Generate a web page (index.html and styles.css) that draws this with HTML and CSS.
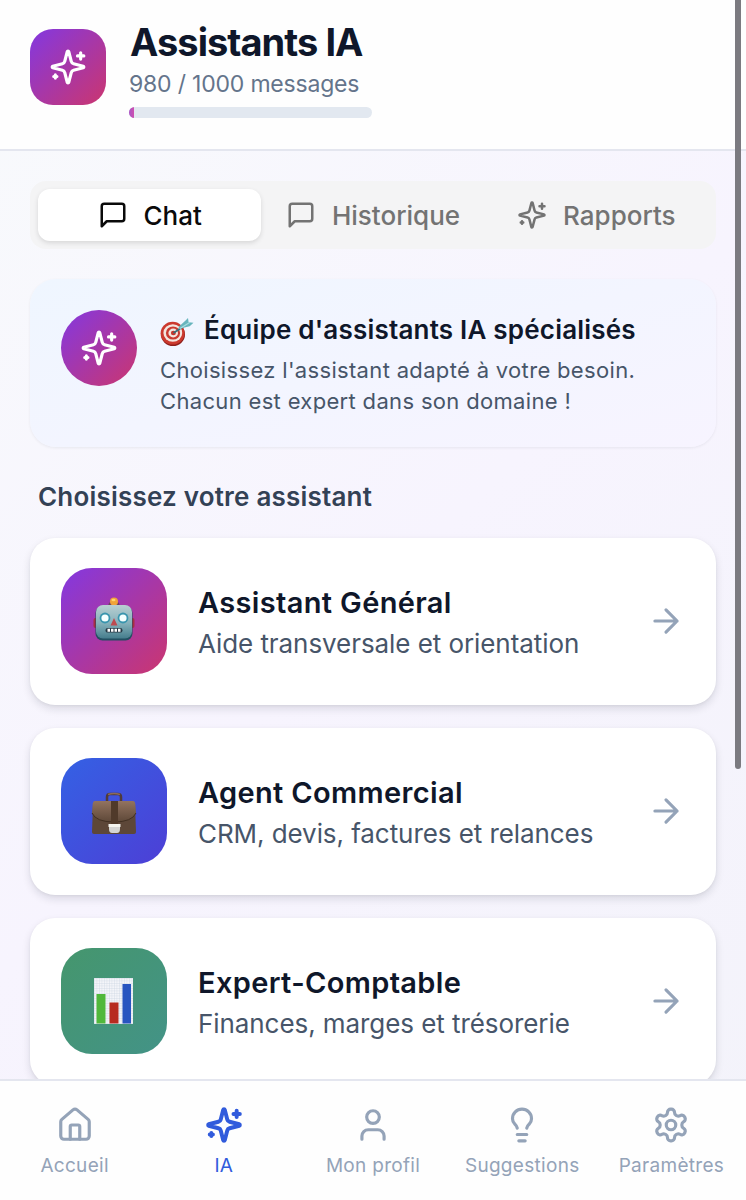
FILE: index.html
```html
<!DOCTYPE html>
<html lang="fr">
<head>
  <meta charset="UTF-8" />
  <meta name="viewport" content="width=device-width, initial-scale=1.0"/>
  <title>Assistants IA</title>
  <link rel="stylesheet" href="styles.css">
</head>
<body>
  <!-- Shared icons -->
  <svg class="sprite">
    <symbol id="sparkles" viewBox="0 0 24 24">
      <path d="M9.937 15.5A2 2 0 0 0 8.5 14.063l-6.135-1.582a.5.5 0 0 1 0-.962L8.5 9.936A2 2 0 0 0 9.937 8.5l1.582-6.135a.5.5 0 0 1 .963 0L14.063 8.5A2 2 0 0 0 15.5 9.937l6.135 1.581a.5.5 0 0 1 0 .964L15.5 14.063a2 2 0 0 0-1.437 1.437l-1.582 6.135a.5.5 0 0 1-.963 0z"/>
      <path d="M20 3v4M22 5h-4M4 17v2M5 18H3"/>
    </symbol>
    <symbol id="message" viewBox="0 0 24 24">
      <path d="M21 15a2 2 0 0 1-2 2H7l-4 4V5a2 2 0 0 1 2-2h14a2 2 0 0 1 2 2z"/>
    </symbol>
    <symbol id="arrow" viewBox="0 0 24 24">
      <path d="M5 12h14M12 5l7 7-7 7"/>
    </symbol>
  </svg>

  <header class="header">
    <div class="logo"><svg class="icon"><use href="#sparkles"/></svg></div>
    <div class="header-text">
      <h1>Assistants IA</h1>
      <p class="quota">980 / 1000 messages</p>
      <div class="progress"><div class="progress-bar" style="width: 2%"></div></div>
    </div>
  </header>

  <main class="content">
    <div class="tabs">
      <button class="tab active"><svg class="icon icon-sm"><use href="#message"/></svg><span>Chat</span></button>
      <button class="tab"><svg class="icon icon-sm"><use href="#message"/></svg><span>Historique</span></button>
      <button class="tab"><svg class="icon icon-sm"><use href="#sparkles"/></svg><span>Rapports</span></button>
    </div>

    <section class="intro">
      <div class="intro-icon"><svg class="icon"><use href="#sparkles"/></svg></div>
      <div class="intro-text">
        <h2>
          <svg class="target" viewBox="0 0 34 30">
            <ellipse cx="13" cy="17.5" rx="12" ry="11.5" fill="#8e1f1b"/>
            <ellipse cx="12.6" cy="16.2" rx="12" ry="11.4" fill="#cb392e"/>
            <ellipse cx="12.8" cy="16" rx="9.4" ry="8.8" fill="#f3e6df"/>
            <ellipse cx="13" cy="16" rx="7.1" ry="6.6" fill="#c93a30"/>
            <ellipse cx="13.2" cy="16" rx="4.8" ry="4.4" fill="#f3e6df"/>
            <ellipse cx="13.4" cy="16" rx="2.5" ry="2.3" fill="#c5352c"/>
            <path d="M13.5 16L24 9" stroke="#34707c" stroke-width="1.6"/>
            <path d="M19 9.5l6-5.5 3-3 .6 4.2 4.9.5-3.8 3.6-5.2 1.2-6 1.8z" fill="#67b5bd"/>
            <path d="M20 11.5l10-6.3" stroke="#a6dce0" stroke-width="1.2"/>
          </svg>
          <span>Équipe d'assistants IA spécialisés</span>
        </h2>
        <p>Choisissez l'assistant adapté à votre besoin.<br>Chacun est expert dans son domaine !</p>
      </div>
    </section>

    <h3 class="section-title">Choisissez votre assistant</h3>

    <div class="assistant-list">
      <a class="assistant">
        <div class="avatar avatar-general">
          <svg viewBox="0 0 42 44">
            <defs>
              <linearGradient id="metal" x1="0" y1="0" x2="0" y2="1">
                <stop offset="0" stop-color="#b9cfd2"/>
                <stop offset=".55" stop-color="#84b0ba"/>
                <stop offset="1" stop-color="#457d8c"/>
              </linearGradient>
            </defs>
            <rect x=".5" y="21" width="5" height="10" rx="2" fill="#a92d43"/>
            <rect x="36.5" y="21" width="5" height="10" rx="2" fill="#a92d43"/>
            <ellipse cx="21" cy="7.5" rx="5.5" ry="3.5" fill="#70405f"/>
            <circle cx="21" cy="4.5" r="4" fill="#f0a338"/>
            <ellipse cx="20.5" cy="3" rx="2" ry="1.3" fill="#ffd36d"/>
            <rect x="2.5" y="9" width="37" height="34.5" rx="7" fill="#234f61"/>
            <rect x="3" y="8" width="36" height="33.5" rx="7" fill="url(#metal)"/>
            <circle cx="12" cy="21" r="5.4" fill="#3995ae"/>
            <circle cx="30" cy="21" r="5.4" fill="#3995ae"/>
            <circle cx="12" cy="21" r="3.6" fill="#f5ffff"/>
            <circle cx="30" cy="21" r="3.6" fill="#f5ffff"/>
            <path d="M21 21l3.500 7.500h-7z" fill="#bd4a4f"/>
            <rect x="12.5" y="31" width="17" height="4.6" rx="2.2" fill="#263945"/>
            <path d="M14.500 33.300h13" stroke="#fff" stroke-width="3" stroke-dasharray="2.500 1"/>
          </svg>
        </div>
        <div class="assistant-text">
          <h4>Assistant Général</h4>
          <p>Aide transversale et orientation</p>
        </div>
        <svg class="icon arrow"><use href="#arrow"/></svg>
      </a>

      <a class="assistant">
        <div class="avatar avatar-sales">
          <svg class="briefcase" viewBox="0 0 46 44">
            <defs>
              <linearGradient id="leather" x1="0" y1="0" x2="0" y2="1">
                <stop offset="0" stop-color="#927360"/>
                <stop offset="1" stop-color="#5e4838"/>
              </linearGradient>
            </defs>
            <path d="M16 11V6q0-3 3-3h8q3 0 3 3v5" fill="none" stroke="#4f3b3b" stroke-width="2.5"/>
            <path d="M17 3.500q6-2 12 0" fill="none" stroke="#8b6a5b" stroke-width="1.5"/>
            <path d="M2 14h42l1 27q0 2-2 2H3q-2 0-2-2z" fill="#5d4738"/>
            <path d="M4 10h38q2 0 2.300 3l.7 9q-4 9-22 9T1 22l.7-9Q2 10 4 10z" fill="url(#leather)"/>
            <path d="M1 22q4 9 22 9t22-9" fill="none" stroke="#423022" stroke-width="1"/>
            <path d="M20 10h7v23h-7z" fill="#503a2a"/>
            <path d="M18 33h11v5q0 4-3 4h-5q-3 0-3-4z" fill="#d5d5d3"/>
            <path d="M17.500 33h12v3h-12z" fill="#f4f4ee"/>
          </svg>
        </div>
        <div class="assistant-text">
          <h4>Agent Commercial</h4>
          <p>CRM, devis, factures et relances</p>
        </div>
        <svg class="icon arrow"><use href="#arrow"/></svg>
      </a>

      <a class="assistant">
        <div class="avatar avatar-finance">
          <svg class="chart" viewBox="0 0 39 46">
            <defs>
              <pattern id="graph-paper" width="2.5" height="2.5" patternUnits="userSpaceOnUse">
                <path d="M0 0h2.500M0 0v2.500" stroke="#cbd3df" stroke-width=".7"/>
              </pattern>
            </defs>
            <path d="M0 0h39v46H0z" fill="#f4f5f9"/>
            <path d="M0 0h39v46H0z" fill="url(#graph-paper)"/>
            <path d="M2.500 16h9v29.500h-9z" fill="#51b83b"/>
            <path d="M15.500 24.500h9v21h-9z" fill="#b72b20"/>
            <path d="M28.500 6h8.500v39.500h-8.500z" fill="#2855c0"/>
          </svg>
        </div>
        <div class="assistant-text">
          <h4>Expert-Comptable</h4>
          <p>Finances, marges et trésorerie</p>
        </div>
        <svg class="icon arrow"><use href="#arrow"/></svg>
      </a>
    </div>
  </main>

  <nav class="bottom-nav">
    <a class="nav-item">
      <svg class="icon" viewBox="0 0 24 24"><path d="M15 21v-8a1 1 0 0 0-1-1h-4a1 1 0 0 0-1 1v8"/><path d="M3 10a2 2 0 0 1 .709-1.528l7-5.999a2 2 0 0 1 2.582 0l7 5.999A2 2 0 0 1 21 10v9a2 2 0 0 1-2 2H5a2 2 0 0 1-2-2z"/></svg>
      <span>Accueil</span>
    </a>
    <a class="nav-item current">
      <svg class="icon"><use href="#sparkles"/></svg>
      <span>IA</span>
    </a>
    <a class="nav-item">
      <svg class="icon" viewBox="0 0 24 24"><path d="M19 21v-2a4 4 0 0 0-4-4H9a4 4 0 0 0-4 4v2"/><circle cx="12" cy="7" r="4"/></svg>
      <span>Mon profil</span>
    </a>
    <a class="nav-item">
      <svg class="icon" viewBox="0 0 24 24"><path d="M15 14c.2-1 .7-1.700 1.500-2.500 1-.9 1.500-2.200 1.500-3.500A6 6 0 0 0 6 8c0 1 .2 2.200 1.500 3.500.7.7 1.300 1.500 1.500 2.500M9 18h6M10 22h4"/></svg>
      <span>Suggestions</span>
    </a>
    <a class="nav-item">
      <svg class="icon" viewBox="0 0 24 24"><path d="M12.22 2h-.44a2 2 0 0 0-2 2v.18a2 2 0 0 1-1 1.730l-.43.25a2 2 0 0 1-2 0l-.15-.08a2 2 0 0 0-2.730.73l-.22.38a2 2 0 0 0 .73 2.730l.15.1a2 2 0 0 1 1 1.720v.51a2 2 0 0 1-1 1.740l-.15.09a2 2 0 0 0-.73 2.730l.22.38a2 2 0 0 0 2.730.73l.15-.08a2 2 0 0 1 2 0l.43.25a2 2 0 0 1 1 1.730V20a2 2 0 0 0 2 2h.44a2 2 0 0 0 2-2v-.18a2 2 0 0 1 1-1.730l.43-.25a2 2 0 0 1 2 0l.15.08a2 2 0 0 0 2.730-.73l.22-.39a2 2 0 0 0-.73-2.730l-.15-.08a2 2 0 0 1-1-1.740v-.5a2 2 0 0 1 1-1.740l.15-.09a2 2 0 0 0 .73-2.730l-.22-.38a2 2 0 0 0-2.730-.73l-.15.08a2 2 0 0 1-2 0l-.43-.25a2 2 0 0 1-1-1.730V4a2 2 0 0 0-2-2z"/><circle cx="12" cy="12" r="3"/></svg>
      <span>Paramètres</span>
    </a>
  </nav>

  <div class="scroll-thumb"></div>
</body>
</html>
```

FILE: styles.css
```css
* {
  box-sizing: border-box;
}

body {
  margin: 0;
  height: 1200px;
  display: flex;
  flex-direction: column;
  overflow: hidden;
  position: relative;
  font-family: Inter, "Liberation Sans", sans-serif;
  color: #0f172a;
  background: linear-gradient(135deg, #f8fafc 0%, #f7f4fe 50%, #f3f3fa 100%);
}

h1, h2, h3, h4, p {
  margin: 0;
}

.sprite {
  display: none;
}

.icon {
  width: 38px;
  height: 38px;
  flex: none;
  fill: none;
  stroke: currentColor;
  stroke-width: 2;
  stroke-linecap: round;
  stroke-linejoin: round;
}

.icon-sm {
  width: 30px;
  height: 30px;
}

/* Header */
.header {
  flex: none;
  height: 151px;
  display: flex;
  align-items: flex-start;
  gap: 23px;
  padding: 18px 30px 0;
  background: #fefefe;
  border-bottom: 2px solid #e4e6ef;
}

.logo {
  width: 76px;
  height: 76px;
  margin-top: 11px;
  display: flex;
  align-items: center;
  justify-content: center;
  border-radius: 23px;
  color: #fff;
  background: linear-gradient(135deg, #8338e0, #cb366f);
}

.header h1 {
  padding-left: 1px;
  font-size: 38px;
  line-height: 48px;
  font-weight: 700;
  letter-spacing: -0.95px;
}

.quota {
  margin-top: 1px;
  font-size: 23px;
  line-height: 34px;
  letter-spacing: -0.2px;
  color: #64748b;
}

.progress {
  width: 243px;
  height: 11px;
  margin-top: 6px;
  border-radius: 6px;
  overflow: hidden;
  background: #e2e8f0;
}

.progress-bar {
  height: 100%;
  background: linear-gradient(90deg, #a855c7, #cf4fae);
}

/* Content */
.content {
  flex: 1;
  min-height: 0;
  overflow: hidden;
  padding: 30px 30px 0;
}

.tabs {
  height: 68px;
  padding: 8px;
  display: grid;
  grid-template-columns: repeat(3, 1fr);
  border-radius: 16px;
  background: #f4f4f5;
}

.tab {
  display: flex;
  align-items: center;
  justify-content: center;
  gap: 16px;
  padding: 0;
  border: 0;
  border-radius: 12px;
  background: none;
  color: #737373;
  font: 500 26px Inter, "Liberation Sans", sans-serif;
}

.tab.active {
  background: #fff;
  color: #0a0a0a;
  box-shadow: 0 2px 5px rgba(0, 0, 0, 0.12);
}

.intro {
  height: 168px;
  margin-top: 30px;
  padding: 31px;
  display: flex;
  gap: 23px;
  border-radius: 26px;
  background: linear-gradient(165deg, #eff6ff, #f7f4ff);
  box-shadow: 0 1px 3px rgba(15, 23, 42, 0.07);
}

.intro-icon {
  width: 76px;
  height: 76px;
  flex: none;
  display: flex;
  align-items: center;
  justify-content: center;
  border-radius: 50%;
  color: #fff;
  background: linear-gradient(135deg, #8338e0, #cb366f);
}

.intro h2 {
  display: flex;
  align-items: center;
  gap: 10px;
  font-size: 26px;
  line-height: 40px;
  font-weight: 600;
  letter-spacing: 0.2px;
  white-space: nowrap;
}

.target {
  width: 34px;
  height: 30px;
  margin-top: 3px;
}

.intro p {
  margin-top: 5px;
  font-size: 22px;
  line-height: 31px;
  letter-spacing: 0.33px;
  color: #475569;
  white-space: nowrap;
}

.section-title {
  margin: 30px 0 22px 8px;
  font-size: 26px;
  line-height: 39px;
  font-weight: 600;
  letter-spacing: 0.2px;
  color: #334155;
}

/* Assistants */
.assistant-list {
  display: flex;
  flex-direction: column;
  gap: 23px;
}

.assistant {
  height: 167px;
  flex: none;
  display: flex;
  align-items: center;
  padding: 0 31px 1px;
  border-radius: 25px;
  background: #fff;
  box-shadow: 0 4px 9px rgba(15, 23, 42, 0.12), 0 1px 3px rgba(15, 23, 42, 0.05);
}

.avatar {
  width: 106px;
  height: 106px;
  flex: none;
  display: flex;
  align-items: center;
  justify-content: center;
  border-radius: 31px;
}

.avatar svg {
  width: 42px;
  height: 44px;
  margin-bottom: 4px;
}

.avatar .briefcase {
  width: 46px;
  margin: 4px 0 0;
}

.avatar .chart {
  width: 39px;
  height: 46px;
  margin: 0 1px 0 0;
}

.avatar-general {
  background: linear-gradient(135deg, #8338e0, #cb366f);
}

.avatar-sales {
  background: linear-gradient(135deg, #3461e4, #4d3fd6);
}

.avatar-finance {
  background: linear-gradient(135deg, #45966d, #439387);
}

.assistant-text {
  flex: 1;
  margin-left: 31px;
  padding-top: 4px;
  white-space: nowrap;
}

.assistant h4 {
  font-size: 29px;
  line-height: 42px;
  font-weight: 600;
  letter-spacing: 0.35px;
}

.assistant p {
  font-size: 26px;
  line-height: 40px;
  letter-spacing: -0.07px;
  color: #475569;
}

.arrow {
  color: #94a3b8;
}

/* Bottom navigation */
.bottom-nav {
  flex: none;
  height: 121px;
  display: grid;
  grid-template-columns: repeat(5, 1fr);
  border-top: 2px solid #e4e6ef;
  background: #fefefe;
}

.nav-item {
  display: flex;
  flex-direction: column;
  align-items: center;
  padding-top: 25px;
  gap: 8px;
  color: #94a3b8;
  font-size: 19px;
  line-height: 28px;
  letter-spacing: 0.3px;
  white-space: nowrap;
}

.nav-item.current {
  color: #315bdc;
}

.nav-item.current .icon {
  stroke-width: 2.5;
}

.scroll-thumb {
  position: absolute;
  top: -10px;
  right: 5px;
  width: 6px;
  height: 779px;
  border-radius: 3px;
  background: #7b7a80;
}
```
